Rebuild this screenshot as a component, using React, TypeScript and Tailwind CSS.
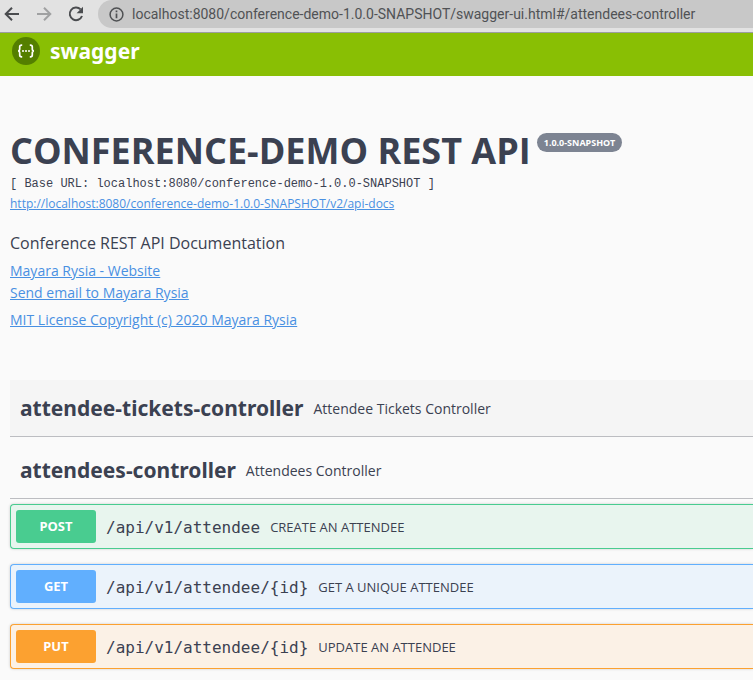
type Operation = {
  method: string;
  path: string;
  summary: string;
  box: string;
  badge: string;
};

const operations: Operation[] = [
  {
    method: "POST",
    path: "/api/v1/attendee",
    summary: "CREATE AN ATTENDEE",
    box: "border-[#49cc90] bg-[#e8f5ee]",
    badge: "bg-[#49cc90]",
  },
  {
    method: "GET",
    path: "/api/v1/attendee/{id}",
    summary: "GET A UNIQUE ATTENDEE",
    box: "border-[#61affe] bg-[#ebf3fb]",
    badge: "bg-[#61affe]",
  },
  {
    method: "PUT",
    path: "/api/v1/attendee/{id}",
    summary: "UPDATE AN ATTENDEE",
    box: "border-[#fca130] bg-[#fbf1e6]",
    badge: "bg-[#fca130]",
  },
];

function BrowserBar() {
  return (
    <div className="flex h-[33px] items-start border-b border-[#9c9e9f] bg-[#e2e2e2]">
      <nav aria-label="History" className="flex h-7 items-center">
        <button type="button" aria-label="Back" className="flex w-8 pl-1 text-[#4a4c4f]">
          <svg width="16" height="16" viewBox="0 0 16 16" fill="none" stroke="currentColor" strokeWidth="2">
            <path d="M15 8H2.5M8 1.7 1.7 8 8 14.3" />
          </svg>
        </button>
        <button type="button" aria-label="Forward" className="flex w-8 pl-1 text-[#a0a1a2]">
          <svg width="16" height="16" viewBox="0 0 16 16" fill="none" stroke="currentColor" strokeWidth="2">
            <path d="M1 8h12.500M8 1.700 14.300 8 8 14.300" />
          </svg>
        </button>
        <button type="button" aria-label="Reload" className="flex w-[34px] pl-1 text-[#4a4c4f]">
          <svg width="16" height="16" viewBox="0 0 16 16" fill="none">
            <path d="M12.600 3.400A6.300 6.300 0 1 0 14 10" stroke="currentColor" strokeWidth="2" />
            <path d="M15 .8v6.400H8.600z" fill="currentColor" />
          </svg>
        </button>
      </nav>
      <div className="flex h-7 min-w-0 flex-1 items-center gap-2 rounded-l-full bg-[#c8c8c8] pl-[11px]">
        <svg width="15" height="15" viewBox="0 0 15 15" fill="none" className="shrink-0 text-[#4f5153]">
          <circle cx="7.500" cy="7.500" r="6.400" stroke="currentColor" strokeWidth="1.500" />
          <path d="M7.500 6.600v4.600M7.500 3.600v1.700" stroke="currentColor" strokeWidth="1.700" />
        </svg>
        <input
          aria-label="Address"
          readOnly
          value="localhost:8080/conference-demo-1.0.0-SNAPSHOT/swagger-ui.html#/attendees-controller"
          className="min-w-0 flex-1 bg-transparent font-['Roboto',sans-serif] text-sm text-[#505255] outline-none"
        />
      </div>
    </div>
  );
}

function SwaggerHeader() {
  return (
    <header className="bg-[#89bf04] px-3">
      <a href="#top" className="flex h-[43px] w-fit items-start gap-2.5 pt-1 text-white">
        <svg width="28" height="28" viewBox="0 0 28 28" fill="none" aria-hidden="true">
          <circle cx="14" cy="14" r="14" fill="#547f00" />
          <path
            d="M10.200 8.200H9.600c-1.300 0-1.900.7-1.900 1.900v2c0 1.200-.5 1.900-1.700 1.900 1.200 0 1.700.7 1.700 1.900v2c0 1.200.6 1.900 1.900 1.900h.6M17.800 8.200h.6c1.300 0 1.900.7 1.900 1.900v2c0 1.200.5 1.900 1.700 1.900-1.200 0-1.700.7-1.700 1.900v2c0 1.200-.6 1.900-1.900 1.900h-.6"
            stroke="#fff"
            strokeWidth="1.700"
          />
          <g fill="#fff">
            <circle cx="11" cy="14" r="1" />
            <circle cx="14" cy="14" r="1" />
            <circle cx="17" cy="14" r="1" />
          </g>
        </svg>
        <span className="font-['Noto_Sans',sans-serif] text-[21px] leading-7 font-bold">swagger</span>
      </a>
    </header>
  );
}

function ApiInfo() {
  return (
    <section className="flex flex-col items-start pt-[52px] pb-12">
      <div className="flex items-start gap-1.5 whitespace-nowrap">
        <h1 className="text-4xl leading-[46px] font-bold">CONFERENCE-DEMO REST API</h1>
        <span className="mt-[5px] rounded-full bg-[#7d8492] px-[7px] font-['Noto_Sans',sans-serif] text-[9px] leading-[19px] font-bold text-white">
          1.0.0-SNAPSHOT
        </span>
      </div>
      <pre className="font-['Liberation_Mono',monospace] text-xs leading-5">
        [ Base URL: localhost:8080/conference-demo-1.0.0-SNAPSHOT ]
      </pre>
      <a href="#api-docs" className="text-xs leading-5 text-[#4990e2] underline">
        http://localhost:8080/conference-demo-1.0.0-SNAPSHOT/v2/api-docs
      </a>
      <p className="mt-[17px] text-base leading-6">Conference REST API Documentation</p>
      <div className="mt-[5px] flex flex-col items-start text-sm leading-[22px] text-[#4990e2] underline">
        <a href="#website">Mayara Rysia - Website</a>
        <a href="#email">Send email to Mayara Rysia</a>
        <a href="#license" className="mt-[5px]">MIT License Copyright (c) 2020 Mayara Rysia</a>
      </div>
    </section>
  );
}

function TagHeading({ name, description, hovered }: { name: string; description: string; hovered?: boolean }) {
  return (
    <div
      className={
        hovered
          ? "flex h-[57px] items-center gap-2.5 border-b border-[#bcbdc1] bg-[#f5f5f5] pl-2.5"
          : "flex h-[57px] items-center gap-2.5 border-b border-[#bcbdc1] pl-2.5"
      }
    >
      <h2 className="font-['Noto_Sans',sans-serif] text-[21px] leading-8 font-bold">{name}</h2>
      <p className="pt-0.5 text-sm">{description}</p>
    </div>
  );
}

function OperationRow({ method, path, summary, box, badge }: Operation) {
  return (
    <button
      type="button"
      className={`flex w-full items-center rounded-l border border-r-0 p-[5px] text-left shadow-[0_0_3px_rgba(0,0,0,0.19)] ${box}`}
    >
      <span
        className={`w-20 rounded-[3px] text-center font-['Noto_Sans',sans-serif] text-[13px] leading-[33px] font-bold text-white ${badge}`}
      >
        {method}
      </span>
      <span className="px-2.5 pt-0.5 font-['DejaVu_Sans_Mono',monospace] text-base">{path}</span>
      <span className="pt-0.5 text-[13px]">{summary}</span>
    </button>
  );
}

export default function App() {
  return (
    <div id="top" className="min-h-screen overflow-hidden bg-[#fafafa] font-['Open_Sans',sans-serif] text-[#3b4151]">
      <BrowserBar />
      <SwaggerHeader />
      <main className="pl-2.5">
        <ApiInfo />
        <section className="mt-px">
          <TagHeading name="attendee-tickets-controller" description="Attendee Tickets Controller" hovered />
        </section>
        <section className="mt-[5px]">
          <TagHeading name="attendees-controller" description="Attendees Controller" />
          <div className="mt-[5px] flex flex-col gap-[15px]">
            {operations.map((operation) => (
              <OperationRow key={operation.method} {...operation} />
            ))}
          </div>
        </section>
      </main>
    </div>
  );
}
